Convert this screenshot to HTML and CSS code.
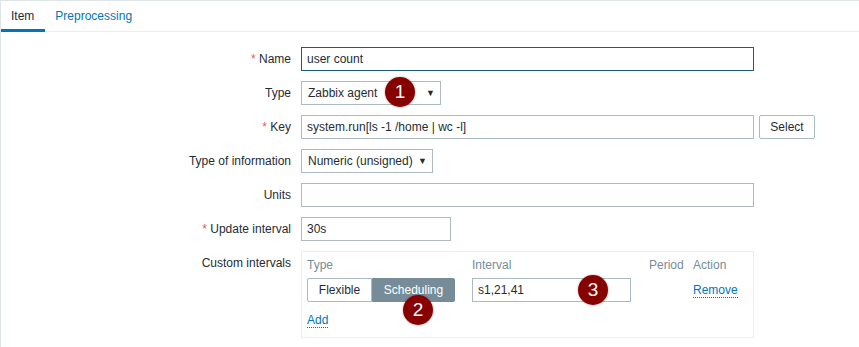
FILE: index.html
```html
<!DOCTYPE html>
<html>
<head>
<meta charset="utf-8">
<title>Item</title>
<link rel="stylesheet" href="styles.css">
</head>
<body>
<div class="frame">
  <ul class="tabs">
    <li class="tab active">Item</li>
    <li class="tab"><a href="#">Preprocessing</a></li>
  </ul>

  <ul class="form">
    <li class="row">
      <label class="label req">Name</label>
      <div class="field"><input class="input wide focus" type="text" value="user count"></div>
    </li>
    <li class="row">
      <label class="label">Type</label>
      <div class="field"><span class="select w-type">Zabbix agent<span class="arrow">&#9660;</span></span></div>
    </li>
    <li class="row">
      <label class="label req">Key</label>
      <div class="field">
        <input class="input wide" type="text" value="system.run[ls -1 /home | wc -l]">
        <button class="btn">Select</button>
      </div>
    </li>
    <li class="row">
      <label class="label">Type of information</label>
      <div class="field"><span class="select w-info">Numeric (unsigned)<span class="arrow">&#9660;</span></span></div>
    </li>
    <li class="row">
      <label class="label">Units</label>
      <div class="field"><input class="input wide" type="text" value=""></div>
    </li>
    <li class="row">
      <label class="label req">Update interval</label>
      <div class="field"><input class="input w-delay" type="text" value="30s"></div>
    </li>
    <li class="row">
      <label class="label">Custom intervals</label>
      <div class="field">
        <div class="intervals">
          <div class="ihead">Type</div>
          <div class="ihead">Interval</div>
          <div class="ihead">Period</div>
          <div class="ihead">Action</div>

          <div class="radio">
            <span class="seg">Flexible</span><span class="seg on">Scheduling</span>
          </div>
          <div><input class="input w-interval" type="text" value="s1,21,41"></div>
          <div></div>
          <div class="cell"><a class="link" href="#">Remove</a></div>

          <div class="addrow"><a class="link" href="#">Add</a></div>
        </div>
      </div>
    </li>
  </ul>

  <span class="badge b1">1</span>
  <span class="badge b2">2</span>
  <span class="badge b3">3</span>
</div>
</body>
</html>
```

FILE: styles.css
```css
* { box-sizing: border-box; }
html, body { margin: 0; padding: 0; background: #fff; }
body { font-family: "Liberation Sans", Arial, sans-serif; font-size: 12px; color: #1f2c33; }

.frame {
  position: relative;
  height: 347px;
  border-top: 1px solid #dfe4e7;
  border-left: 1px solid #dfe4e7;
}

.tabs {
  display: flex;
  margin: 0; padding: 0;
  list-style: none;
  height: 31px;
  border-bottom: 1px solid #ebeef0;
}
.tab { padding: 0 11px 0 10px; line-height: 30px; height: 31px; margin-bottom: -1px; }
.tab a { color: #0275b8; text-decoration: none; }
.tab.active { border-bottom: 3px solid #0275b8; color: #1f2c33; }

.form { list-style: none; margin: 0; padding: 15px 0 0; }
.row {
  display: grid;
  grid-template-columns: 290px 1fr;
  column-gap: 10px;
  margin-bottom: 10px;
}
.label { text-align: right; line-height: 24px; }
.label.req::before { content: "* "; color: #e45959; }
.field { display: flex; align-items: flex-start; gap: 5px; }

.input {
  height: 24px;
  border: 1px solid #acbbc2;
  padding: 0 5px;
  font: inherit;
  color: #1f2c33;
  background: #fff;
  outline: none;
}
.input.focus { border-color: #1d5a85; }
.wide { width: 453px; }
.w-delay { width: 150px; }
.w-interval { width: 159px; }

.select {
  display: flex;
  justify-content: space-between;
  align-items: center;
  height: 24px;
  padding: 0 5px 0 6px;
  border: 1px solid #acbbc2;
}
.w-type { width: 140px; }
.w-info { width: 132px; }
.arrow { font-size: 9px; color: #1f2c33; }

.btn {
  height: 24px;
  width: 56px;
  border: 1px solid #acbbc2;
  border-radius: 2px;
  background: #fff;
  font: inherit;
  color: #1f2c33;
}

.intervals {
  display: grid;
  grid-template-columns: 165px 177px 44px 1fr;
  width: 453px;
  border: 1px solid #ebeef0;
  padding: 5px 5px 9px;
  row-gap: 5px;
}
.ihead { color: #768d99; line-height: 16px; }
.cell { line-height: 24px; }
.radio { display: flex; }
.seg {
  height: 24px;
  line-height: 22px;
  padding: 0 10px;
  border: 1px solid #acbbc2;
  color: #1f2c33;
  text-align: center;
}
.seg:first-child { border-radius: 2px 0 0 2px; width: 65px; }
.seg.on {
  background: #768d99;
  border-color: #768d99;
  color: #fff;
  border-radius: 0 2px 2px 0;
  width: 83px;
}
.addrow { grid-column: 1 / -1; margin-top: 5px; line-height: 16px; }
.link { color: #0275b8; text-decoration: none; border-bottom: 1px dotted #0275b8; }

.badge {
  position: absolute;
  width: 30px; height: 30px;
  border-radius: 50%;
  background: #870000;
  color: #fff;
  font-size: 19px;
  line-height: 30px;
  text-align: center;
  box-shadow: 0 0 1px 1px rgba(135, 0, 0, 0.15);
}
.b1 { left: 384px; top: 76px; }
.b2 { left: 402px; top: 294px; }
.b3 { left: 577px; top: 274px; }
```
